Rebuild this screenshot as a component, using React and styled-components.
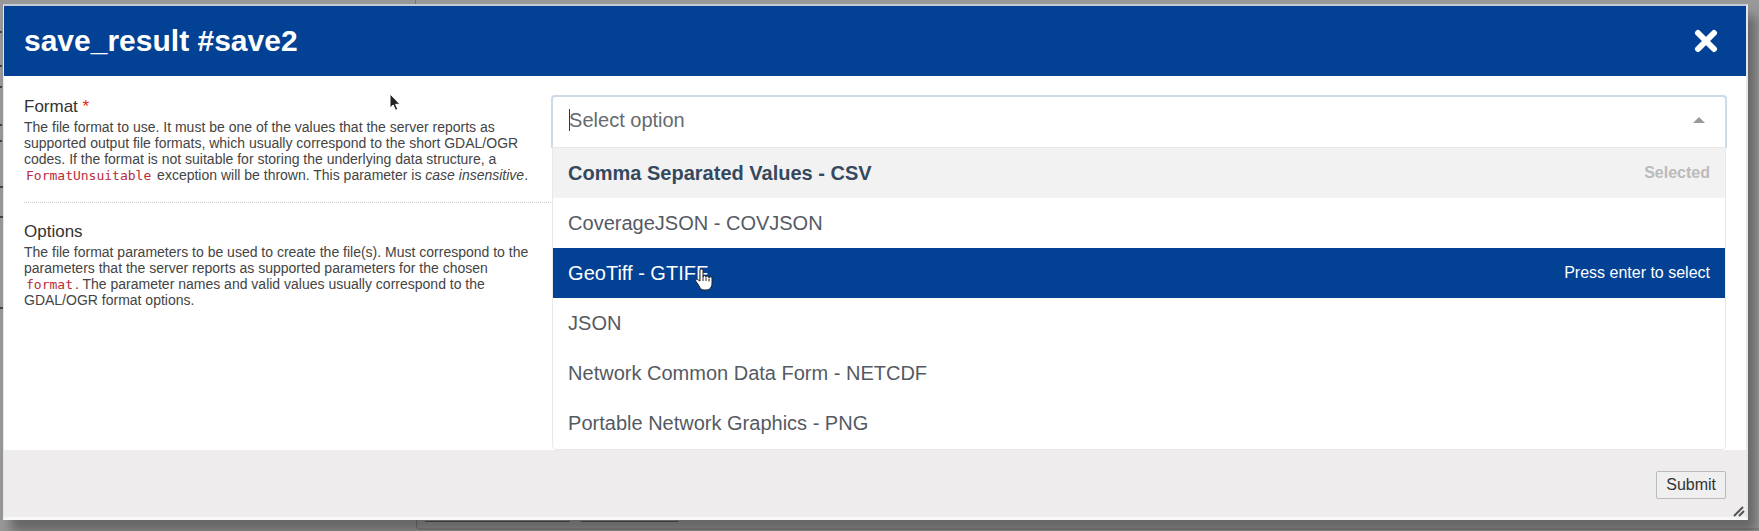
import React from "react";
import styled, { createGlobalStyle, css } from "styled-components";

const GlobalStyle = createGlobalStyle`
  * { box-sizing: border-box; }
  body {
    margin: 0;
    background: #999899;
    font-family: "Liberation Sans", Arial, sans-serif;
    color: #333;
  }
`;

const Page = styled.div`
  position: relative;
  min-height: 100vh;
  padding: 4px 11px 10px 3px;
  overflow: hidden;
`;

const BackdropMarks = styled.svg`
  position: absolute;
  inset: 0;
  width: 100%;
  height: 100%;
`;

const Dialog = styled.section`
  position: relative;
  background: #fff;
  border: 1px solid;
  border-width: 2px 2px 3px 1px;
  border-color: #c3cbd9 #e4e6ec #f8f8f8 #e4e6ec;
  box-shadow: 8px 12px 10px 0 rgba(0, 0, 0, 0.32);
`;

const Header = styled.header`
  display: flex;
  align-items: center;
  justify-content: space-between;
  height: 70px;
  padding: 0 28px 0 20px;
  background: #034195;
  color: #fff;
`;

const Title = styled.h1`
  margin: 0;
  font-size: 30px;
  line-height: 32px;
`;

const CloseButton = styled.button`
  display: flex;
  padding: 0;
  border: 0;
  background: none;
  color: inherit;
`;

const Body = styled.div`
  display: grid;
  grid-template-columns: 13fr 29fr;
  padding: 19px 19px 0 20px;
`;

const Field = styled.div`
  padding: 0 16px 19px 0;

  & + & {
    padding-top: 17px;
    border-top: 1px dotted #ccc;
  }
`;

const Label = styled.label`
  display: block;
  font-size: 17px;
  line-height: 24px;
`;

const Required = styled.span`
  color: #f21c0d;
`;

const Description = styled.p`
  margin: 0;
  font-size: 14px;
  line-height: 16px;
  color: #444;
`;

const Code = styled.code`
  padding: 0 2px;
  font-family: "DejaVu Sans Mono", monospace;
  font-size: 13px;
  line-height: 13px;
  color: #b92c3a;
`;

const Combo = styled.div`
  display: flex;
  flex-direction: column;
`;

const InputBox = styled.div`
  display: flex;
  align-items: center;
  height: 53px;
  padding: 0 20px 4px 16px;
  border: 2px solid #cbdbe9;
  border-bottom: 1px solid #e8e8e8;
  border-radius: 4px 4px 0 0;
`;

const ComboInput = styled.input`
  flex: 1;
  min-width: 0;
  padding: 0;
  border: 0;
  outline: 0;
  background: none;
  font: 20px/24px "Liberation Sans", Arial, sans-serif;
  color: #35495e;

  &::placeholder {
    color: #666a70;
    opacity: 1;
  }
`;

const Caret = styled.span`
  width: 1px;
  height: 22px;
  margin-right: -1px;
  background: #333;
`;

const Options = styled.ul`
  margin: 0 1px;
  padding: 0 0 1px;
  list-style: none;
  border: 1px solid #e8e8e8;
  border-top: 0;
  border-radius: 0 0 5px 5px;
`;

const Option = styled.li`
  display: flex;
  align-items: center;
  justify-content: space-between;
  height: 50px;
  padding: 0 15px;
  font-size: 20px;
  line-height: 24px;
  color: #555a62;

  ${({ $state }) => $state === "selected" && css`
    background: #f3f2f3;
    color: #35495e;
    font-weight: bold;
  `}
  ${({ $state }) => $state === "active" && css`
    background: #034195;
    color: #fff;
  `}
`;

const Hint = styled.span`
  font-size: 16px;
  color: ${({ $muted }) => ($muted ? "#bbb" : "inherit")};
`;

const Footer = styled.footer`
  position: relative;
  display: flex;
  justify-content: flex-end;
  padding: 21px 20px 18px;
  background: #eeeced;
`;

const SubmitButton = styled.button`
  height: 28px;
  padding: 0 9px;
  border: 1px solid #bbb;
  border-radius: 2px;
  background: #efefef;
  font: 16px/20px "Liberation Sans", Arial, sans-serif;
  color: #333;
`;

const ResizeGrip = styled.svg`
  position: absolute;
  right: 1px;
  bottom: 0;
`;

const Pointer = styled.svg`
  position: absolute;
  left: ${({ $x }) => $x}px;
  top: ${({ $y }) => $y}px;
  pointer-events: none;
`;

const OPTIONS = [
  { text: "Comma Separated Values - CSV", state: "selected", hint: "Selected" },
  { text: "CoverageJSON - COVJSON" },
  { text: "GeoTiff - GTIFF", state: "active", hint: "Press enter to select" },
  { text: "JSON" },
  { text: "Network Common Data Form - NETCDF" },
  { text: "Portable Network Graphics - PNG" },
];

export default function App() {
  return (
    <Page>
      <GlobalStyle />
      <BackdropMarks aria-hidden="true">
        <path d="M415.500 0v5" stroke="#777" />
        <path d="M0 32h2M0 66h2M0 87h2M0 125h2M0 141h2M0 187h3M0 217h3M0 308h3" stroke="#444" strokeWidth="2" />
        <path d="M416.500 518v8q0 3 3 3H1759" fill="none" stroke="#777" />
        <path d="M425 521.500h145M581 521.500h97" stroke="#555" />
      </BackdropMarks>
      <Dialog role="dialog" aria-labelledby="dialog-title">
        <Header>
          <Title id="dialog-title">save_result #save2</Title>
          <CloseButton type="button" aria-label="Close">
            <svg width="24" height="24" viewBox="0 0 24 24" fill="none" stroke="currentColor" strokeWidth="6" strokeLinecap="round">
              <path d="M4 4 20 20M20 4 4 20" />
            </svg>
          </CloseButton>
        </Header>
        <Body>
          <div>
            <Field>
              <Label htmlFor="format">Format <Required>*</Required></Label>
              <Description>
                The file format to use. It must be one of the values that the server reports as
                supported output file formats, which usually correspond to the short GDAL/OGR
                codes. If the format is not suitable for storing the underlying data structure, a{" "}
                <Code>FormatUnsuitable</Code> exception will be thrown. This parameter is <em>case insensitive</em>.
              </Description>
            </Field>
            <Field>
              <Label as="div">Options</Label>
              <Description>
                The file format parameters to be used to create the file(s). Must correspond to the
                parameters that the server reports as supported parameters for the chosen{" "}
                <Code>format</Code>. The parameter names and valid values usually correspond to the
                GDAL/OGR format options.
              </Description>
            </Field>
          </div>
          <Combo>
            <InputBox>
              <Caret />
              <ComboInput id="format" role="combobox" aria-expanded="true" aria-controls="format-options" placeholder="Select option" />
              <svg width="12" height="6" viewBox="0 0 12 6" aria-hidden="true"><path d="M0 6 6 0l6 6z" fill="#999" /></svg>
            </InputBox>
            <Options id="format-options" role="listbox">
              {OPTIONS.map(({ text, state, hint }) => (
                <Option key={text} role="option" aria-selected={state === "selected"} $state={state}>
                  {text}
                  {hint && <Hint $muted={state === "selected"}>{hint}</Hint>}
                </Option>
              ))}
            </Options>
          </Combo>
        </Body>
        <Footer>
          <SubmitButton type="submit">Submit</SubmitButton>
          <ResizeGrip width="12" height="12" viewBox="0 0 12 12" stroke="#555" strokeWidth="2" aria-hidden="true">
            <path d="M1 11 10 2M6 11l5-5" />
          </ResizeGrip>
        </Footer>
      </Dialog>
      <Pointer $x={389} $y={93} width="12" height="19" viewBox="0 0 12 19" aria-hidden="true">
        <path d="M1 1v14l3.200-3 2.300 5.300 2.300-1-2.200-5H11z" fill="#222" stroke="#fff" />
      </Pointer>
      <Pointer $x={695} $y={268} width="18" height="23" viewBox="0 0 18 23" aria-hidden="true">
        <path d="M5 13V2.500a1.500 1.500 0 0 1 3 0V9a1.500 1.500 0 0 1 3 .3 1.500 1.500 0 0 1 3 .7 1.400 1.400 0 0 1 3 .7V15c0 4-2 7-6 7H9c-3 0-4-2-5.500-5L1 13.500c-1-2 1-3 2.500-1.500z" fill="#fff" stroke="#222" />
        <path d="M8 9v4M11 10v3M14 10.500v3" stroke="#222" />
      </Pointer>
    </Page>
  );
}
